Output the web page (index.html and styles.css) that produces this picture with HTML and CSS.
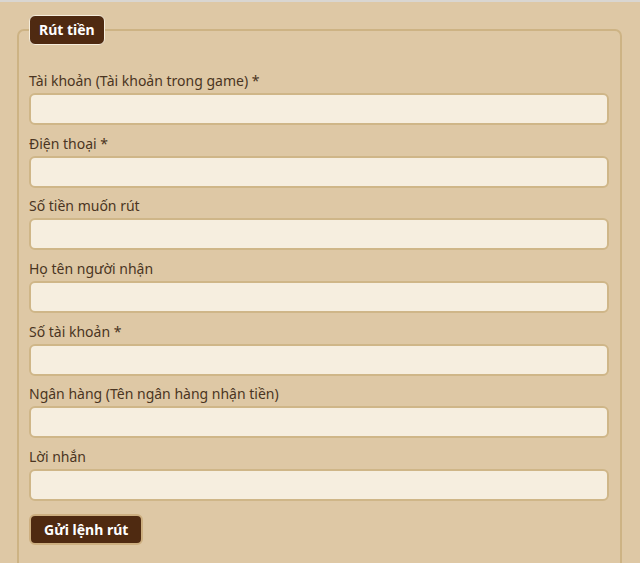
FILE: index.html
```html
<!DOCTYPE html>
<html lang="vi">
<head>
    <meta charset="UTF-8">
    <meta name="viewport" content="width=device-width, initial-scale=1.0">
    <title>Rút tiền</title>
    <link rel="stylesheet" href="styles.css">
</head>
<body>
    <!-- Withdraw Form -->
    <fieldset class="withdraw-box">
        <legend>Rút tiền</legend>
        <form class="withdraw-form" onsubmit="return false;">
            <div class="form-group">
                <label for="account">Tài khoản (Tài khoản trong game) *</label>
                <input type="text" id="account">
            </div>
            <div class="form-group">
                <label for="phone">Điện thoại *</label>
                <input type="text" id="phone">
            </div>
            <div class="form-group">
                <label for="amount">Số tiền muốn rút</label>
                <input type="text" id="amount">
            </div>
            <div class="form-group">
                <label for="receiver">Họ tên người nhận</label>
                <input type="text" id="receiver">
            </div>
            <div class="form-group">
                <label for="bankAccount">Số tài khoản *</label>
                <input type="text" id="bankAccount">
            </div>
            <div class="form-group">
                <label for="bank">Ngân hàng (Tên ngân hàng nhận tiền)</label>
                <input type="text" id="bank">
            </div>
            <div class="form-group">
                <label for="message">Lời nhắn</label>
                <input type="text" id="message">
            </div>
            <button type="submit" class="btn-submit">Gửi lệnh rút</button>
        </form>
    </fieldset>
</body>
</html>
```
FILE: styles.css
```css
/* Global Styles */
body {
    font-family: "Noto Sans", "Open Sans", sans-serif;
    font-size: 14px;
    margin: 0;
    padding: 0 18px 0 17px;
    background-color: #dec8a5; /* beige */
    color: #4a3522; /* dark brown text */
    border-top: 2px solid #d9d6d1;
}

/* Fieldset box */
.withdraw-box {
    margin: 13px 0 0 0;
    padding: 25px 11px 24px 10px;
    border: 2px solid #cdb384;
    border-radius: 7px;
}

.withdraw-box legend {
    padding: 4px 9px 5px 9px;
    background-color: #4f2a11;
    color: #fff;
    font-weight: bold;
    font-size: 14px;
    border: 1px solid #f6eedc;
    border-radius: 6px;
}

/* Form rows */
.form-group {
    margin-bottom: 7.67px;
}

.form-group label {
    display: block;
    line-height: 21px;
    margin-bottom: 2px;
}

.form-group input {
    display: block;
    box-sizing: border-box;
    width: 100%;
    height: 32px;
    padding: 4px 8px;
    background-color: #f6eedf;
    border: 2px solid #cfb688;
    border-radius: 6px;
    font-family: inherit;
    font-size: 14px;
    color: #4a3522;
    outline: none;
}

/* Submit button */
.btn-submit {
    margin-top: 5px;
    height: 31px;
    padding: 0 13px;
    background-color: #4f2a11;
    color: #fff;
    font-family: inherit;
    font-size: 14px;
    font-weight: bold;
    border: 2px solid #cdaf80;
    border-radius: 6px;
    cursor: pointer;
}

.btn-submit:hover {
    background-color: #673818;
}
```
